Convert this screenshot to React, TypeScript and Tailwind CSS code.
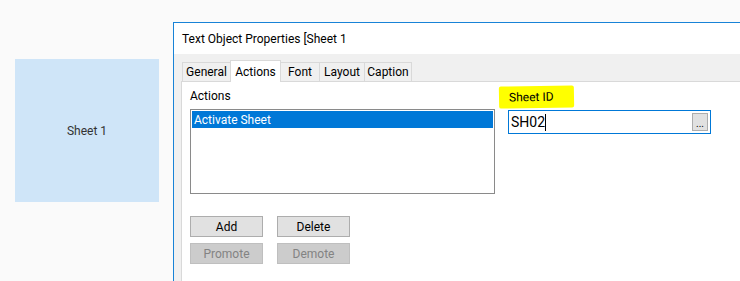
export default function App() {
  const tabs: [string, string][] = [
    ["General", "w-[49px]"],
    ["Actions", "w-[51px]"],
    ["Font", "w-[40px]"],
    ["Layout", "w-[46px]"],
    ["Caption", "w-[48px]"],
  ];
  const font = { fontFamily: 'Roboto, "Liberation Sans", sans-serif' };

  return (
    <div
      className="w-[740px] h-[281px] bg-[#fafafa] flex overflow-hidden text-[12px] text-black"
      style={font}
    >
      {/* sheet object */}
      <div className="shrink-0 ml-[15px] mt-[59px] w-[144px] h-[143px] bg-[#cfe5f8] flex items-center justify-center text-[#333]">
        Sheet 1
      </div>

      {/* dialog */}
      <div className="shrink-0 ml-[14px] mt-[22px] w-[600px] flex flex-col border-l border-t border-[#1883d7] bg-[#f0f0f0]">
        <div className="h-[31px] bg-white flex items-center pl-[8px] text-[12px]">
          Text Object Properties [Sheet 1
        </div>

        <div className="flex-1 flex flex-col pl-[7px]">
          {/* tab strip */}
          <div className="h-[27px] flex items-end pl-[1px]">
            {tabs.map(([t, w]) =>
              t === "Actions" ? (
                <div
                  key={t}
                  className={`${w} h-[22px] -mb-px z-10 flex items-center justify-center bg-white border border-b-0 border-[#d9d9d9] relative -ml-px`}
                >
                  {t}
                </div>
              ) : (
                <div
                  key={t}
                  className={`${w} h-[19px] flex items-center justify-center bg-[#f0f0f0] border border-b-0 border-[#d9d9d9] -ml-px first:ml-0`}
                >
                  {t}
                </div>
              )
            )}
          </div>

          {/* tab panel */}
          <div className="flex-1 bg-white border-t border-l border-[#d9d9d9] flex pl-[8px]">
            <div className="w-[305px] flex flex-col">
              <div className="h-[27px] flex items-end pb-[4px]">Actions</div>
              <div className="h-[85px] border border-[#8a8a8a] p-[1px]">
                <div className="h-[17px] bg-[#0078d7] text-white flex items-center pl-[2px]">
                  Activate Sheet
                </div>
              </div>

              <div className="mt-[22px] flex flex-col gap-[6px]">
                <div className="flex gap-[14px]">
                  <button className="w-[73px] h-[21px] bg-[#e1e1e1] border border-[#adadad] flex items-center justify-center">
                    Add
                  </button>
                  <button className="w-[73px] h-[21px] bg-[#e1e1e1] border border-[#adadad] flex items-center justify-center">
                    Delete
                  </button>
                </div>
                <div className="flex gap-[14px]">
                  <button className="w-[73px] h-[21px] bg-[#cccccc] border border-[#bfbfbf] text-[#838383] flex items-center justify-center">
                    Promote
                  </button>
                  <button className="w-[73px] h-[21px] bg-[#cccccc] border border-[#bfbfbf] text-[#838383] flex items-center justify-center">
                    Demote
                  </button>
                </div>
              </div>
            </div>

            <div className="ml-[4px] flex flex-col">
              <div className="mt-[4px] w-[75px] h-[22px] bg-[#ffff00] rounded-[2px] flex items-center pl-[10px] -rotate-1">
                Sheet ID
              </div>
              <div className="ml-[9px] mt-[2px] w-[203px] h-[24px] border border-[#0078d7] bg-white flex items-center pl-[2px] pr-[2px]">
                <span className="text-[14px]">SH02</span>
                <span className="w-px h-[17px] bg-black" />
                <div className="ml-auto w-[16px] h-[18px] bg-[#e1e1e1] border border-[#adadad] flex items-end justify-center text-[10px] leading-[12px]">
                  ...
                </div>
              </div>
            </div>
          </div>
        </div>
      </div>
    </div>
  );
}
